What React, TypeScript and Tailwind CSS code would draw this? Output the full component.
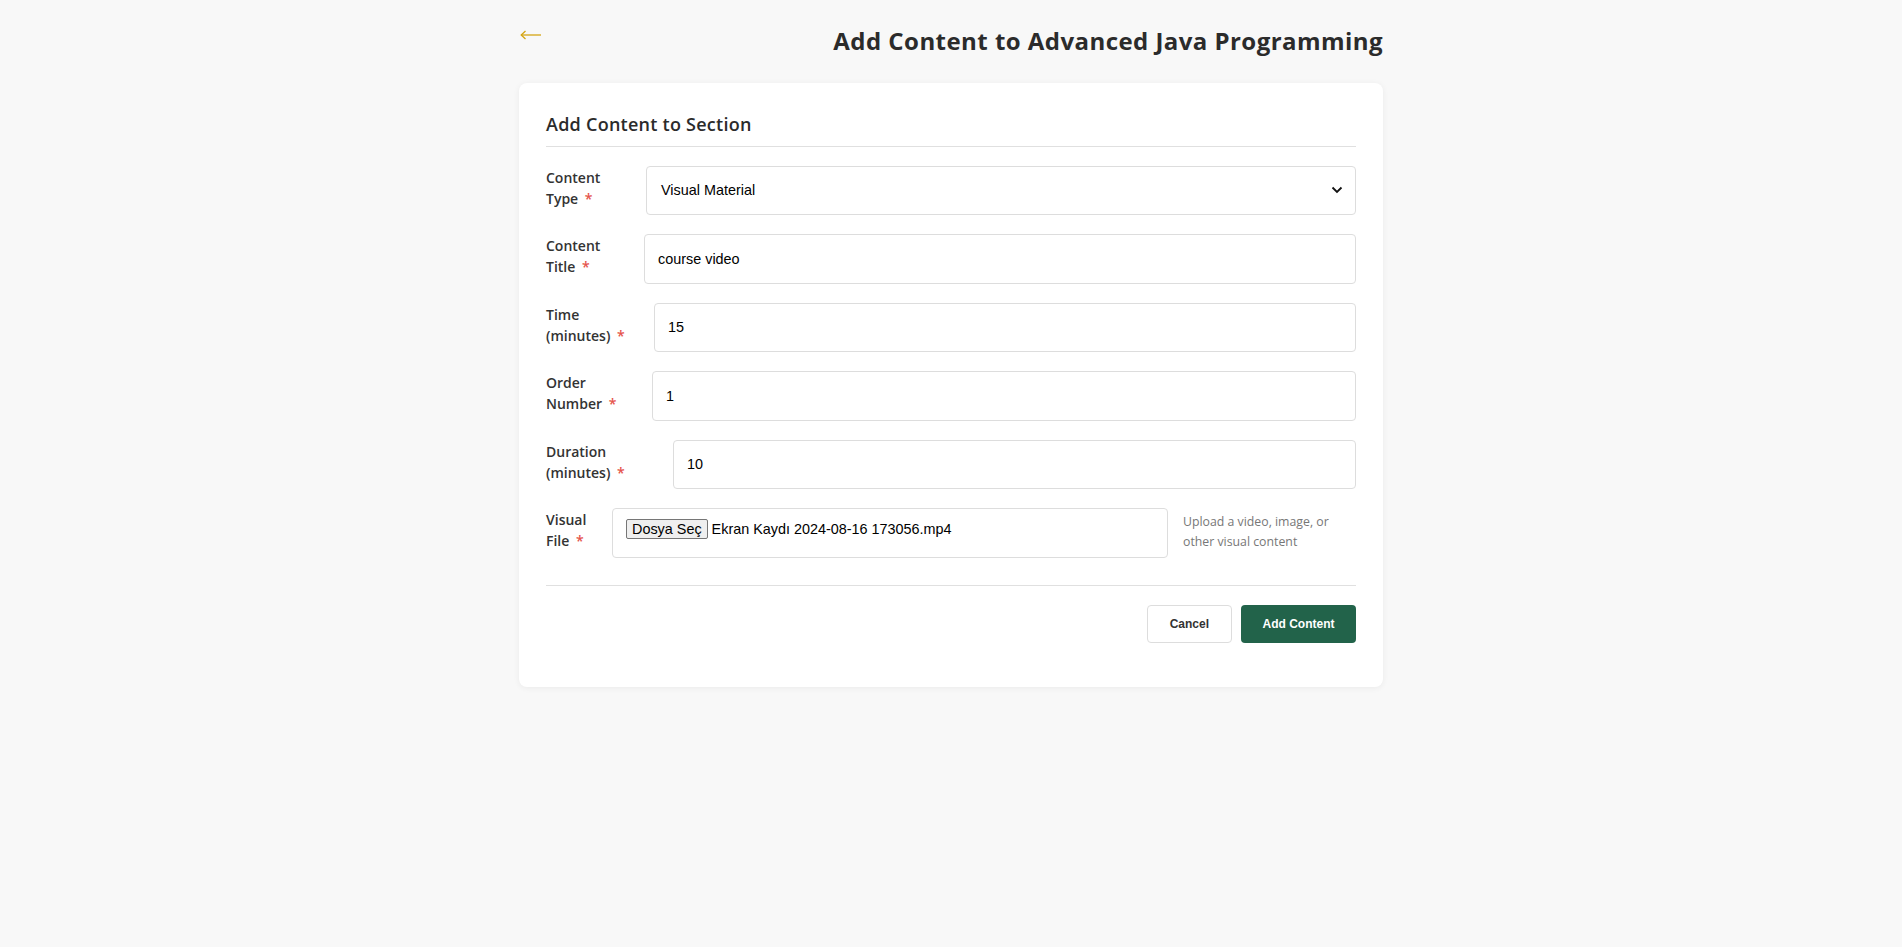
import React from "react";

const uiFont = { fontFamily: '"Segoe UI", "Open Sans", "Noto Sans", sans-serif' };

function Label({ l1, l2, w }: { l1: string; l2: string; w: string }) {
  return (
    <label className={`${w} shrink-0 pt-[1px] text-[14px] leading-[21px] font-semibold text-[#333]`}>
      {l1}
      <br />
      {l2} <span className="text-[#e5534b] ml-[3px]">*</span>
    </label>
  );
}

function Row({ children, last }: { children: React.ReactNode; last?: boolean }) {
  return <div className={`flex gap-4 items-start ${last ? "" : "mb-[19px]"}`}>{children}</div>;
}

function TextBox({ value }: { value: string }) {
  return (
    <div
      className="flex-1 h-[49.5px] border border-[#ddd] rounded-[4px] bg-white flex items-center pt-[2px] pl-[13px] text-[14.4px] text-black"
      style={{ fontFamily: '"Liberation Sans", Arial, sans-serif' }}
    >
      {value}
    </div>
  );
}

export default function App() {
  return (
    <div className="min-h-screen bg-[#f8f8f8]" style={uiFont}>
      <div className="w-[864px] mx-auto pt-[23px]">
        <div className="flex justify-between items-start mb-[24px]">
          <button className="mt-[7px] ml-[1px] w-[22px] h-[10px] flex items-center" aria-label="Back">
            <svg width="22" height="10" viewBox="0 0 22 10" fill="none">
              <path d="M1 5 H21" stroke="#d4a514" strokeWidth="1.3" />
              <path d="M5.5 1 L1.2 5 L5.5 9" stroke="#d4a514" strokeWidth="1.3" fill="none" />
            </svg>
          </button>
          <h1 className="text-[24px] leading-[36px] font-bold tracking-[0.45px] text-[#2b2b2b]">
            Add Content to Advanced Java Programming
          </h1>
        </div>

        <div className="bg-white rounded-[8px] shadow-[0_1px_6px_rgba(0,0,0,0.06)] px-[27px] pt-[28px] pb-[44px]">
          <h2 className="text-[18px] leading-[27px] font-semibold tracking-[0.25px] text-[#2b2b2b] pb-[8px] border-b border-[#e0e0e0]">
            Add Content to Section
          </h2>

          <div className="mt-[18.5px]">
            <Row>
              <Label l1="Content" l2="Type" w="w-[84px]" />
              <div
                className="flex-1 h-[49.5px] border border-[#ddd] rounded-[4px] bg-white flex items-center justify-between pt-[2px] pl-[14px] pr-[12px] text-[14.4px] text-black"
                style={{ fontFamily: '"Liberation Sans", Arial, sans-serif' }}
              >
                <span>Visual Material</span>
                <svg width="12" height="8" viewBox="0 0 12 8" fill="none" className="-mt-[2px]">
                  <path d="M1.5 1.5 L6 6 L10.5 1.5" stroke="#111" strokeWidth="1.8" />
                </svg>
              </div>
            </Row>
            <Row>
              <Label l1="Content" l2="Title" w="w-[82px]" />
              <TextBox value="course video" />
            </Row>
            <Row>
              <Label l1="Time" l2="(minutes)" w="w-[92px]" />
              <TextBox value="15" />
            </Row>
            <Row>
              <Label l1="Order" l2="Number" w="w-[90px]" />
              <TextBox value="1" />
            </Row>
            <Row>
              <Label l1="Duration" l2="(minutes)" w="w-[111px]" />
              <TextBox value="10" />
            </Row>
            <Row last>
              <Label l1="Visual" l2="File" w="w-[50px]" />
              <div
                className="flex-1 h-[49.5px] border border-[#ddd] rounded-[4px] bg-white flex items-start pt-[10px] pl-[13px] text-[14.4px] text-black"
                style={{ fontFamily: '"Liberation Sans", Arial, sans-serif' }}
              >
                <span className="h-[20px] px-[5px] border border-[#767676] rounded-[2px] bg-[#efefef] text-[14.4px] leading-[18px] text-black">
                  Dosya Seç
                </span>
                <span className="ml-[4px] text-[14.4px] leading-[20px]">Ekran Kaydı 2024-08-16 173056.mp4</span>
              </div>
              <div className="w-[173px] shrink-0 -ml-[1px] pt-[4px] text-[12.3px] leading-[19.5px] text-[#777]">
                Upload a video, image, or other visual content
              </div>
            </Row>
          </div>

          <div className="mt-[27px] border-t border-[#e0e0e0] pt-[19px] flex justify-end gap-[9px]">
            <button
              className="h-[38px] px-[22px] border border-[#ddd] rounded-[4px] bg-white text-[12px] font-bold text-[#333]"
              style={{ fontFamily: '"Liberation Sans", Arial, sans-serif' }}
            >
              Cancel
            </button>
            <button
              className="h-[38px] w-[115px] rounded-[4px] bg-[#22634a] text-[12px] font-bold text-white"
              style={{ fontFamily: '"Liberation Sans", Arial, sans-serif' }}
            >
              Add Content
            </button>
          </div>
        </div>
      </div>
    </div>
  );
}
